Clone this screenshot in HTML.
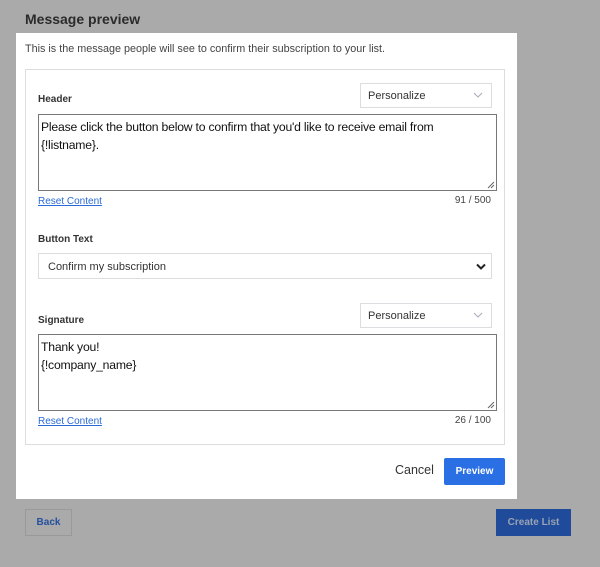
<!DOCTYPE html>
<html><head><style>
*{box-sizing:border-box;margin:0;padding:0}
body{width:600px;height:567px;background:#aaaaaa;font-family:"Liberation Sans",Arial,sans-serif;position:relative;overflow:hidden;color:#222}
.a{position:absolute}
.title{left:25px;top:11px;font-size:14px;font-weight:bold;color:#2b2b2b}
.panel{left:16px;top:33px;width:501px;height:466px;background:#fff}
.desc{left:25px;top:43px;font-size:10.8px;color:#444}
.box{left:25px;top:69px;width:480px;height:376px;border:1px solid #dcdde0}
.lbl{font-size:10px;font-weight:bold;color:#333}
.pers{width:132px;height:25px;border:1px solid #dcdde0;font-size:11px;color:#333;padding:6px 0 0 7px}
.pers svg{position:absolute;right:8px;top:8px}
.ta{left:38px;width:459px;height:77px;border:1px solid #777;font-size:12.2px;letter-spacing:-0.2px;line-height:18px;padding:3px 2px;color:#111}
.ta svg{position:absolute;right:1px;bottom:1px}
.reset{left:38px;font-size:10px;color:#2a6ad8;text-decoration:underline}
.cnt{right:109px;font-size:10px;color:#444;text-align:right}
.sel{left:38px;top:253px;width:454px;height:26px;border:1px solid #dcdde0;font-size:11px;color:#333;padding:7px 0 0 9px}
.sel svg{position:absolute;right:5px;top:9px}
.cancel{left:395px;top:463px;font-size:12.5px;color:#333}
.prev{left:444px;top:458px;width:61px;height:27px;background:#2a6fe3;color:#fff;font-size:10px;font-weight:bold;text-align:center;line-height:27px;border-radius:2px}
.back{left:25px;top:509px;width:47px;height:27px;border:1px solid #999;color:#24509e;font-size:10px;font-weight:bold;text-align:center;line-height:25px}
.create{left:496px;top:509px;width:75px;height:27px;background:#1f4b9a;color:#9aa3b4;font-size:10px;font-weight:bold;text-align:center;line-height:27px}
</style></head><body>
<div class="a title">Message preview</div>
<div class="a panel"></div>
<div class="a desc">This is the message people will see to confirm their subscription to your list.</div>
<div class="a box"></div>
<div class="a lbl" style="left:38px;top:94px">Header</div>
<div class="a pers" style="left:360px;top:83px">Personalize<svg width="10" height="6" viewBox="0 0 10 6"><path d="M1 1l4 4 4-4" stroke="#aab" fill="none"/></svg></div>
<div class="a ta" style="top:114px">Please click the button below to confirm that you'd like to receive email from<br>{!listname}.<svg width="8" height="8" viewBox="0 0 8 8"><path d="M7 1L1 7M7 4L4 7" stroke="#666"/></svg></div>
<div class="a reset" style="top:196px">Reset Content</div>
<div class="a cnt" style="top:195px">91 / 500</div>
<div class="a lbl" style="left:38px;top:234px">Button Text</div>
<div class="a sel">Confirm my subscription<svg width="10" height="7" viewBox="0 0 10 7"><path d="M1 1.5l4 4 4-4" stroke="#222" stroke-width="2" fill="none"/></svg></div>
<div class="a lbl" style="left:38px;top:315px">Signature</div>
<div class="a pers" style="left:360px;top:303px">Personalize<svg width="10" height="6" viewBox="0 0 10 6"><path d="M1 1l4 4 4-4" stroke="#aab" fill="none"/></svg></div>
<div class="a ta" style="top:334px">Thank you!<br>{!company_name}<svg width="8" height="8" viewBox="0 0 8 8"><path d="M7 1L1 7M7 4L4 7" stroke="#666"/></svg></div>
<div class="a reset" style="top:416px">Reset Content</div>
<div class="a cnt" style="top:415px">26 / 100</div>
<div class="a cancel">Cancel</div>
<div class="a prev">Preview</div>
<div class="a back">Back</div>
<div class="a create">Create List</div>
</body></html>
